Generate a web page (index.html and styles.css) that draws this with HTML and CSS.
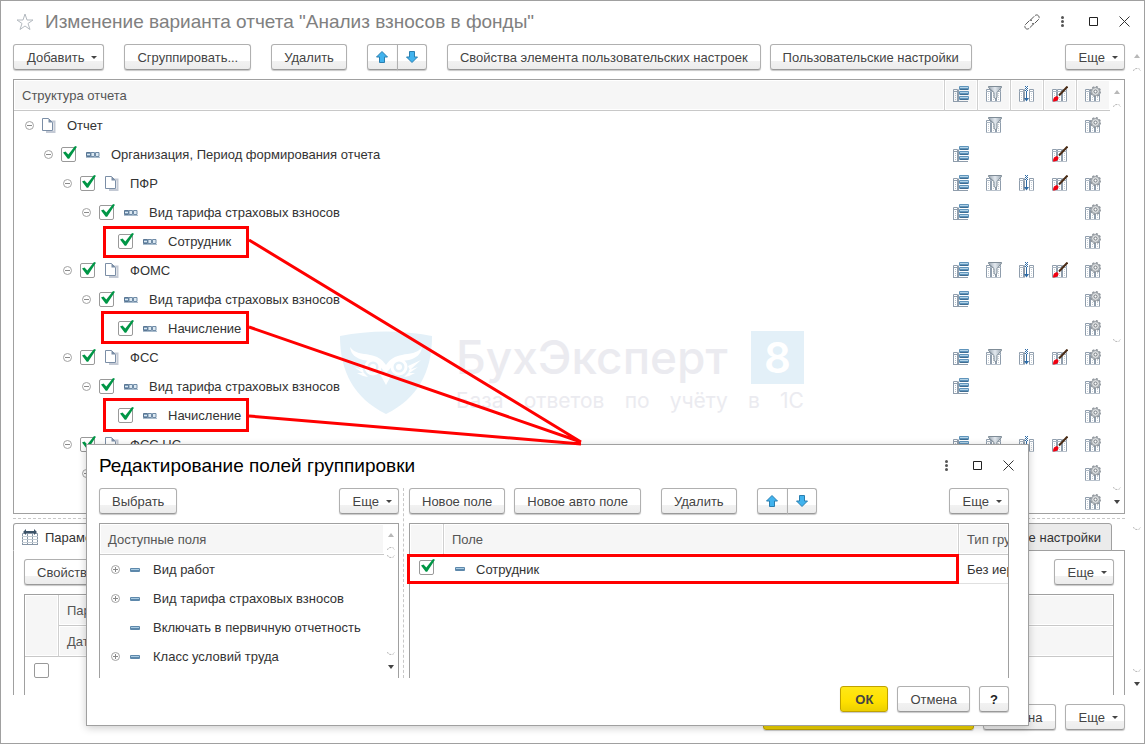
FILE: index.html
```html
<!DOCTYPE html>
<html lang="ru">
<head>
    <meta charset="UTF-8">
    <meta name="viewport" content="width=device-width, initial-scale=1.0">
    <title>Анализ взносов в фонды</title>
    <link rel="stylesheet" href="styles.css">
</head>
<body>
    <svg class="sprite" aria-hidden="true">
        <defs>
            <linearGradient id="steel" x1="0" y1="0" x2="1" y2="0">
                <stop offset="0" stop-color="#9aa6b2"/>
                <stop offset="0.5" stop-color="#e3e9ef"/>
                <stop offset="1" stop-color="#9aa6b2"/>
            </linearGradient>
        </defs>
        <symbol id="i-sheet" viewBox="0 0 16 16">
            <path d="M0 3h15v13H0z" fill="#fff"/>
            <path d="M.5 16V3.5h4V16M5.500 16V3.500h4V16M10.500 16V3.500h4V16" fill="none" stroke="#8f9dac"/>
            <path d="M0 5.500h15" stroke="#a9b5c1"/>
            <path d="M2.500 7v8M7.500 7v8M12.500 7v8" stroke="#c5ced6" stroke-dasharray="1 1"/>
            <path d="M0 15.500h15" stroke="#b9c2cc"/>
        </symbol>
        <symbol id="i-struct" viewBox="0 0 16 16">
            <path d="M.5 16V3.500h4V16M0 15.500h15M0 5.500h5M5.500 15.500v-12" fill="none" stroke="#8f9dac"/>
            <path d="M2.500 7v8" stroke="#b5c0ca" stroke-dasharray="1 1"/>
            <g fill="#5f94bb">
                <rect x="6" y="0" width="10" height="4" rx="1"/>
                <rect x="6" y="5" width="10" height="4" rx="1"/>
                <rect x="6" y="10" width="10" height="4" rx="1"/>
            </g>
            <path d="M7 1.500h8M7 6.500h8M7 11.500h8" stroke="#b4d4e8"/>
            <path d="M7 3.500h8M7 8.500h8M7 13.500h8" stroke="#3f6d92"/>
        </symbol>
        <symbol id="i-filter" viewBox="0 0 16 16">
            <use href="#i-sheet"/>
            <path d="M2.500.5h13v1L11 6.500v5L9.500 12.500 8 11.500v-5L2.500 1.500z" fill="url(#steel)" stroke="#7f8c97"/>
        </symbol>
        <symbol id="i-sort" viewBox="0 0 16 16">
            <use href="#i-sheet"/>
            <path d="M6 0h4v16H6z" fill="#fff"/>
            <path d="M6 .5h3M6 2.500h3M6 4.500h3" stroke="#2c6aa5" stroke-dasharray="1 1"/>
            <path d="M7 1.500h1M7 3.500h1" stroke="#2c6aa5"/>
            <path d="M7.500 5v8" stroke="#2c6aa5"/>
            <path d="M5 12h5l-2.500 3.500z" fill="#2c6aa5"/>
        </symbol>
        <symbol id="i-brush" viewBox="0 0 16 16">
            <use href="#i-sheet"/>
            <path d="M15.500.5 7 9.500" stroke="#4a2c16" stroke-width="2"/>
            <path d="M1 15.500c0-3 1-5 4-5.500l1.500 1.500c0 3-2.500 4-5.500 4z" fill="#f00010"/>
        </symbol>
        <symbol id="i-gear" viewBox="0 0 16 16">
            <use href="#i-sheet"/>
            <circle cx="10.500" cy="5.500" r="4.500" fill="#dfe1e3" stroke="#8b9299" stroke-width="2" stroke-dasharray="2 1.500"/>
            <circle cx="10.500" cy="5.500" r="4" fill="#d9dcde" stroke="#979da3"/>
            <circle cx="10.500" cy="5.500" r="1.500" fill="#fff" stroke="#777d83"/>
        </symbol>
        <symbol id="i-doc" viewBox="0 0 14 15">
            <path d="M5 3.500h7.500v10.500H4" fill="none" stroke="#c3c9d4" stroke-width="2"/>
            <path d="M.5.5h6l4 4v8H.5z" fill="#fff" stroke="#7b8ea6"/>
            <path d="M6.500.5v4h4z" fill="#7b8ea6"/>
        </symbol>
        <symbol id="i-group" viewBox="0 0 14 7">
            <path d="M.5 1.500h4v4h-4z" fill="#7f9fbc" stroke="#5a7692"/>
            <path d="M1 3.500h3" stroke="#dbe8f2"/>
            <path d="M5 1.500h3.500v4H5zM9.500 1.500H13v4H9.500z" fill="#dbe8f2" stroke="#6f8ba6"/>
            <path d="M0 6.500h14" stroke="#a9bccd"/>
        </symbol>
        <symbol id="i-field" viewBox="0 0 10 4">
            <rect width="10" height="4" rx="1" fill="#5d88ab"/>
            <path d="M1 1.500h8" stroke="#a9cbe2"/>
        </symbol>
        <symbol id="i-minus" viewBox="0 0 9 9">
            <circle cx="4.500" cy="4.500" r="4" fill="#fff" stroke="#a3a3a3"/>
            <path d="M2 4.500h5" stroke="#8a8a8a"/>
        </symbol>
        <symbol id="i-plus" viewBox="0 0 9 9">
            <circle cx="4.500" cy="4.500" r="4" fill="#fff" stroke="#a3a3a3"/>
            <path d="M2 4.500h5M4.500 2v5" stroke="#8a8a8a"/>
        </symbol>
        <symbol id="i-up" viewBox="0 0 12 12">
            <path d="M6 .5 11.500 6H8.500v5.500h-5V6H.5z" fill="#41b3ee" stroke="#2a7fb0"/>
        </symbol>
        <symbol id="i-down" viewBox="0 0 12 12">
            <path d="M6 11.500.5 6h3V.5h5V6h3z" fill="#41b3ee" stroke="#2a7fb0"/>
        </symbol>
        <symbol id="i-dots" viewBox="0 0 3 11">
            <g fill="#555"><circle cx="1.500" cy="1.500" r="1.500"/><circle cx="1.500" cy="5.500" r="1.500"/><circle cx="1.500" cy="9.500" r="1.500"/></g>
        </symbol>
        <symbol id="i-max" viewBox="0 0 9 9">
            <path d="M.5.5h8v8h-8z" fill="none" stroke="#222"/>
        </symbol>
        <symbol id="i-close" viewBox="0 0 11 11">
            <path d="M.5.5l10 10M10.500.5l-10 10" stroke="#333"/>
        </symbol>
        <symbol id="i-arc-top" viewBox="0 0 8 3">
            <path d="M.5 3C1 1 2 .5 4 .5S7 1 7.500 3" fill="none" stroke="#b8b8b8" stroke-dasharray="2 1"/>
        </symbol>
        <symbol id="i-arc-bottom" viewBox="0 0 8 3">
            <path d="M.5 0C1 2 2 2.500 4 2.500S7 2 7.500 0" fill="none" stroke="#b8b8b8" stroke-dasharray="2 1"/>
        </symbol>
    </svg>

    <main class="window">
        <header class="titlebar">
            <button class="star" aria-label="Добавить в избранное">
                <svg width="18" height="18" viewBox="0 0 18 18"><path d="M9 1l2 6h6l-5 3.500 2 6-5-3.500-5 3.500 2-6L1 7h6z" fill="#fff" stroke="#b4bac0"/></svg>
            </button>
            <h1>Изменение варианта отчета "Анализ взносов в фонды"</h1>
            <button class="sysbtn" aria-label="Ссылка">
                <svg width="16" height="16" viewBox="0 0 16 16"><path d="M6 6.500 10.500 2c3-3 6 1 4 3.500L11 9c-1 1-2 1-3 .5M10 9.500 5.500 14c-3 3-6-1-4-3.500L5 7c1-1 2-1 3-.5" fill="none" stroke="#555" stroke-dasharray="6 1"/></svg>
            </button>
            <button class="sysbtn" aria-label="Меню"><svg width="3" height="11"><use href="#i-dots"/></svg></button>
            <button class="sysbtn" aria-label="Развернуть"><svg width="9" height="9"><use href="#i-max"/></svg></button>
            <button class="sysbtn" aria-label="Закрыть"><svg width="11" height="11"><use href="#i-close"/></svg></button>
        </header>

        <div class="body">
            <div class="content">
                <div class="toolbar">
                    <button class="btn menu">Добавить</button>
                    <button class="btn">Сгруппировать...</button>
                    <button class="btn">Удалить</button>
                    <div class="pair">
                        <button class="btn" aria-label="Вверх"><svg width="12" height="12"><use href="#i-up"/></svg></button>
                        <button class="btn" aria-label="Вниз"><svg width="12" height="12"><use href="#i-down"/></svg></button>
                    </div>
                    <div class="settings">
                        <button class="btn">Свойства элемента пользовательских настроек</button>
                        <button class="btn">Пользовательские настройки</button>
                    </div>
                    <button class="btn menu last">Еще</button>
                </div>

                <div class="list tree">
                    <table>
                        <thead>
                            <tr>
                                <th>Структура отчета</th>
                                <th class="ic"><svg><use href="#i-struct"/></svg></th>
                                <th class="ic"><svg><use href="#i-filter"/></svg></th>
                                <th class="ic"><svg><use href="#i-sort"/></svg></th>
                                <th class="ic"><svg><use href="#i-brush"/></svg></th>
                                <th class="ic"><svg><use href="#i-gear"/></svg></th>
                            </tr>
                        </thead>
                        <tbody>
                            <tr>
                                <td><div class="node"><button class="toggle" aria-label="Свернуть"><svg><use href="#i-minus"/></svg></button><svg class="doc"><use href="#i-doc"/></svg>Отчет</div></td>
                                <td class="ic"></td>
                                <td class="ic"><svg><use href="#i-filter"/></svg></td>
                                <td class="ic"></td>
                                <td class="ic"></td>
                                <td class="ic"><svg><use href="#i-gear"/></svg></td>
                            </tr>
                            <tr>
                                <td><div class="node l1"><button class="toggle" aria-label="Свернуть"><svg><use href="#i-minus"/></svg></button><label><input type="checkbox" checked><svg class="grp"><use href="#i-group"/></svg>Организация, Период формирования отчета</label></div></td>
                                <td class="ic"><svg><use href="#i-struct"/></svg></td>
                                <td class="ic"></td>
                                <td class="ic"></td>
                                <td class="ic"><svg><use href="#i-brush"/></svg></td>
                                <td class="ic"></td>
                            </tr>
                            <tr>
                                <td><div class="node l2"><button class="toggle" aria-label="Свернуть"><svg><use href="#i-minus"/></svg></button><label><input type="checkbox" checked><svg class="doc"><use href="#i-doc"/></svg>ПФР</label></div></td>
                                <td class="ic"><svg><use href="#i-struct"/></svg></td>
                                <td class="ic"><svg><use href="#i-filter"/></svg></td>
                                <td class="ic"><svg><use href="#i-sort"/></svg></td>
                                <td class="ic"><svg><use href="#i-brush"/></svg></td>
                                <td class="ic"><svg><use href="#i-gear"/></svg></td>
                            </tr>
                            <tr>
                                <td><div class="node l3"><button class="toggle" aria-label="Свернуть"><svg><use href="#i-minus"/></svg></button><label><input type="checkbox" checked><svg class="grp"><use href="#i-group"/></svg>Вид тарифа страховых взносов</label></div></td>
                                <td class="ic"><svg><use href="#i-struct"/></svg></td>
                                <td class="ic"></td>
                                <td class="ic"></td>
                                <td class="ic"></td>
                                <td class="ic"><svg><use href="#i-gear"/></svg></td>
                            </tr>
                            <tr>
                                <td><div class="node leaf"><label><input type="checkbox" checked><svg class="grp"><use href="#i-group"/></svg>Сотрудник</label></div></td>
                                <td class="ic"></td>
                                <td class="ic"></td>
                                <td class="ic"></td>
                                <td class="ic"></td>
                                <td class="ic"><svg><use href="#i-gear"/></svg></td>
                            </tr>
                            <tr>
                                <td><div class="node l2"><button class="toggle" aria-label="Свернуть"><svg><use href="#i-minus"/></svg></button><label><input type="checkbox" checked><svg class="doc"><use href="#i-doc"/></svg>ФОМС</label></div></td>
                                <td class="ic"><svg><use href="#i-struct"/></svg></td>
                                <td class="ic"><svg><use href="#i-filter"/></svg></td>
                                <td class="ic"><svg><use href="#i-sort"/></svg></td>
                                <td class="ic"><svg><use href="#i-brush"/></svg></td>
                                <td class="ic"><svg><use href="#i-gear"/></svg></td>
                            </tr>
                            <tr>
                                <td><div class="node l3"><button class="toggle" aria-label="Свернуть"><svg><use href="#i-minus"/></svg></button><label><input type="checkbox" checked><svg class="grp"><use href="#i-group"/></svg>Вид тарифа страховых взносов</label></div></td>
                                <td class="ic"><svg><use href="#i-struct"/></svg></td>
                                <td class="ic"></td>
                                <td class="ic"></td>
                                <td class="ic"></td>
                                <td class="ic"><svg><use href="#i-gear"/></svg></td>
                            </tr>
                            <tr>
                                <td><div class="node leaf"><label><input type="checkbox" checked><svg class="grp"><use href="#i-group"/></svg>Начисление</label></div></td>
                                <td class="ic"></td>
                                <td class="ic"></td>
                                <td class="ic"></td>
                                <td class="ic"></td>
                                <td class="ic"><svg><use href="#i-gear"/></svg></td>
                            </tr>
                            <tr>
                                <td><div class="node l2"><button class="toggle" aria-label="Свернуть"><svg><use href="#i-minus"/></svg></button><label><input type="checkbox" checked><svg class="doc"><use href="#i-doc"/></svg>ФСС</label></div></td>
                                <td class="ic"><svg><use href="#i-struct"/></svg></td>
                                <td class="ic"><svg><use href="#i-filter"/></svg></td>
                                <td class="ic"><svg><use href="#i-sort"/></svg></td>
                                <td class="ic"><svg><use href="#i-brush"/></svg></td>
                                <td class="ic"><svg><use href="#i-gear"/></svg></td>
                            </tr>
                            <tr>
                                <td><div class="node l3"><button class="toggle" aria-label="Свернуть"><svg><use href="#i-minus"/></svg></button><label><input type="checkbox" checked><svg class="grp"><use href="#i-group"/></svg>Вид тарифа страховых взносов</label></div></td>
                                <td class="ic"><svg><use href="#i-struct"/></svg></td>
                                <td class="ic"></td>
                                <td class="ic"></td>
                                <td class="ic"></td>
                                <td class="ic"><svg><use href="#i-gear"/></svg></td>
                            </tr>
                            <tr>
                                <td><div class="node leaf"><label><input type="checkbox" checked><svg class="grp"><use href="#i-group"/></svg>Начисление</label></div></td>
                                <td class="ic"></td>
                                <td class="ic"></td>
                                <td class="ic"></td>
                                <td class="ic"></td>
                                <td class="ic"><svg><use href="#i-gear"/></svg></td>
                            </tr>
                            <tr>
                                <td><div class="node l2"><button class="toggle" aria-label="Свернуть"><svg><use href="#i-minus"/></svg></button><label><input type="checkbox" checked><svg class="doc"><use href="#i-doc"/></svg>ФСС НС</label></div></td>
                                <td class="ic"><svg><use href="#i-struct"/></svg></td>
                                <td class="ic"><svg><use href="#i-filter"/></svg></td>
                                <td class="ic"><svg><use href="#i-sort"/></svg></td>
                                <td class="ic"><svg><use href="#i-brush"/></svg></td>
                                <td class="ic"><svg><use href="#i-gear"/></svg></td>
                            </tr>
                            <tr>
                                <td><div class="node l3"><button class="toggle" aria-label="Свернуть"><svg><use href="#i-minus"/></svg></button></div></td>
                                <td class="ic"></td>
                                <td class="ic"></td>
                                <td class="ic"></td>
                                <td class="ic"></td>
                                <td class="ic"><svg><use href="#i-gear"/></svg></td>
                            </tr>
                            <tr>
                                <td></td>
                                <td class="ic"></td>
                                <td class="ic"></td>
                                <td class="ic"></td>
                                <td class="ic"></td>
                                <td class="ic"><svg><use href="#i-gear"/></svg></td>
                            </tr>
                        </tbody>
                    </table>
                    <div class="scroll">
                        <i class="tri up"></i>
                        <div class="thumb"><svg><use href="#i-arc-top"/></svg><svg><use href="#i-arc-bottom"/></svg></div>
                        <div class="track"><svg><use href="#i-arc-bottom"/></svg></div>
                        <i class="tri"></i>
                    </div>
                </div>

                <div class="splitter"></div>

                <div class="tabs">
                    <button class="tab active">
                        <svg width="16" height="16" viewBox="0 0 16 16"><path d="M.5 16V4.500h15V16M5.500 5v11M10.500 5v11M0 15.500h16" fill="none" stroke="#8796a6"/><path d="M0 7.500h16M0 10.500h16M0 13.500h16" stroke="#c3ccd4"/><path d="M1 3l3-3v2h8V0l3 3-3 3V4H4v2z" fill="#3c5368"/></svg>
                        Параметры
                    </button>
                    <button class="tab other">Другие настройки</button>
                </div>
                <div class="panel">
                    <div class="toolbar">
                        <button class="btn">Свойства</button>
                        <button class="btn menu last">Еще</button>
                    </div>
                    <div class="list params">
                        <table>
                            <thead>
                                <tr><th class="chk" rowspan="2"></th><th>Параметр</th></tr>
                                <tr><th>Дата</th></tr>
                            </thead>
                            <tbody>
                                <tr><td class="chk"><input type="checkbox" aria-label="Использовать"></td><td></td></tr>
                            </tbody>
                        </table>
                    </div>
                </div>
            </div>

            <div class="scroll">
                <i class="tri up"></i>
                <div class="thumb"><svg><use href="#i-arc-top"/></svg><svg><use href="#i-arc-bottom"/></svg></div>
                <div class="track"><svg><use href="#i-arc-bottom"/></svg></div>
                <i class="tri"></i>
            </div>
        </div>

        <footer class="footer">
            <button class="btn primary">Завершить редактирование</button>
            <button class="btn">Отмена</button>
            <button class="btn menu">Еще</button>
        </footer>

        <div class="watermark" aria-hidden="true">
            <svg width="92" height="83" viewBox="0 0 92 83">
                <path d="M0 5C30-1 62-1 92 5c0 36-14 62-46 78C14 67 0 41 0 5z" fill="#e3f0f8"/>
                <path d="M10 16c5 7 12 6 20 8 7 1 12 4 16 10 4-6 9-9 16-10 8-2 15-1 20-8-1 8-6 11-13 13-10 1-16 4-20 10l-3 3-3-3c-4-6-10-9-20-10-7-2-12-5-13-13z" fill="#fff"/>
                <path d="M11 29l13 6-2 4zM14 36l9 3 1 4zM17 42l7 0 4 4-5-1zM81 29l-13 6 2 4zM78 36l-9 3-1 4zM75 42l-7 0-4 4 5-1z" fill="#fff"/>
                <circle cx="33" cy="36" r="7" fill="#e3f0f8" stroke="#fff" stroke-width="3"/>
                <circle cx="59" cy="36" r="7" fill="#e3f0f8" stroke="#fff" stroke-width="3"/>
                <circle cx="33" cy="36" r="3" fill="#fff"/>
                <circle cx="59" cy="36" r="3" fill="#fff"/>
                <path d="M40 43h12l-6 11z" fill="#fff"/>
            </svg>
            <div class="brand">
                <div class="name"><span>БухЭксперт</span><b>8</b></div>
                <div class="slogan"><span>База</span> <span>ответов</span> <span>по</span> <span>учёту</span> <span>в</span> <span>1С</span></div>
            </div>
        </div>

        <section class="dialog" role="dialog" aria-labelledby="dialogTitle">
            <header class="titlebar">
                <h2 id="dialogTitle">Редактирование полей группировки</h2>
                <button class="sysbtn" aria-label="Меню"><svg width="3" height="11"><use href="#i-dots"/></svg></button>
                <button class="sysbtn" aria-label="Развернуть"><svg width="9" height="9"><use href="#i-max"/></svg></button>
                <button class="sysbtn" aria-label="Закрыть"><svg width="11" height="11"><use href="#i-close"/></svg></button>
            </header>
            <div class="panes">
                <div class="pane available">
                    <div class="toolbar">
                        <button class="btn">Выбрать</button>
                        <button class="btn menu last">Еще</button>
                    </div>
                    <div class="list">
                        <table>
                            <thead>
                                <tr><th>Доступные поля</th></tr>
                            </thead>
                            <tbody>
                                <tr><td><div class="node"><button class="toggle" aria-label="Развернуть"><svg><use href="#i-plus"/></svg></button><svg class="fld"><use href="#i-field"/></svg>Вид работ</div></td></tr>
                                <tr><td><div class="node"><button class="toggle" aria-label="Развернуть"><svg><use href="#i-plus"/></svg></button><svg class="fld"><use href="#i-field"/></svg>Вид тарифа страховых взносов</div></td></tr>
                                <tr><td><div class="node"><span class="toggle"></span><svg class="fld"><use href="#i-field"/></svg>Включать в первичную отчетность</div></td></tr>
                                <tr><td><div class="node"><button class="toggle" aria-label="Развернуть"><svg><use href="#i-plus"/></svg></button><svg class="fld"><use href="#i-field"/></svg>Класс условий труда</div></td></tr>
                            </tbody>
                        </table>
                        <div class="scroll">
                            <i class="tri up"></i>
                            <div class="thumb"><svg><use href="#i-arc-top"/></svg><svg><use href="#i-arc-bottom"/></svg></div>
                            <div class="track"><svg><use href="#i-arc-bottom"/></svg></div>
                            <i class="tri"></i>
                        </div>
                    </div>
                </div>
                <div class="divider"></div>
                <div class="pane chosen">
                    <div class="toolbar">
                        <div class="settings">
                            <button class="btn">Новое поле</button>
                            <button class="btn">Новое авто поле</button>
                        </div>
                        <button class="btn">Удалить</button>
                        <div class="pair">
                            <button class="btn" aria-label="Вверх"><svg width="12" height="12"><use href="#i-up"/></svg></button>
                            <button class="btn" aria-label="Вниз"><svg width="12" height="12"><use href="#i-down"/></svg></button>
                        </div>
                        <button class="btn menu last">Еще</button>
                    </div>
                    <div class="list">
                        <table>
                            <thead>
                                <tr><th class="chk"></th><th>Поле</th><th class="type">Тип группировки</th></tr>
                            </thead>
                            <tbody>
                                <tr>
                                    <td class="chk"><input type="checkbox" id="fieldOn" checked></td>
                                    <td><label class="field" for="fieldOn"><svg class="fld"><use href="#i-field"/></svg>Сотрудник</label></td>
                                    <td class="type">Без иерархии</td>
                                </tr>
                            </tbody>
                        </table>
                    </div>
                </div>
            </div>
            <footer class="footer">
                <button class="btn primary">ОК</button>
                <button class="btn">Отмена</button>
                <button class="btn help">?</button>
            </footer>
        </section>

        <!-- red frames and pointer lines -->
        <svg class="marks" aria-hidden="true">
            <g fill="none" stroke="#f00" stroke-width="3">
                <path d="M103.500 226.500h143v29h-143zM101.500 311.500h145v30h-145zM103.500 398.500h143v31h-143zM407.500 554.500h549v27h-549z"/>
                <path d="M248 239l332 202M248 326l332 115M248 415l332 28"/>
            </g>
        </svg>
    </main>
</body>
</html>
```
FILE: styles.css
```css
* {
    box-sizing: border-box;
}
body {
    margin: 0;
    font-family: "Liberation Sans", Arial, sans-serif;
    font-size: 13px;
    color: #333;
    background-color: #fff;
}
button {
    font: inherit;
    color: inherit;
    background: none;
    border: none;
    padding: 0;
    cursor: pointer;
}
svg {
    display: block;
    flex: none;
}
.sprite {
    position: absolute;
    width: 0;
    height: 0;
}
.window {
    position: relative;
    display: flex;
    flex-direction: column;
    height: 100vh;
    min-height: 640px;
    border: 1px solid #a0a0a0;
    overflow: hidden;
}

/* title bars */
.titlebar {
    display: flex;
    align-items: center;
    height: 43px;
    padding: 0 4px 2px 15px;
}
.titlebar h1,
.titlebar h2 {
    flex: 1;
    margin: 0;
    font-size: 19px;
    font-weight: normal;
    white-space: nowrap;
}
.titlebar h1 {
    color: #808080;
}
.titlebar h2 {
    color: #000;
}
.star {
    margin-right: 11px;
}
.sysbtn {
    display: flex;
    justify-content: center;
    align-items: center;
    width: 31px;
    height: 30px;
}

/* buttons */
.toolbar {
    display: flex;
    gap: 20px;
    margin-bottom: 9px;
}
.settings {
    display: flex;
    gap: 9px;
}
.btn {
    height: 26px;
    padding: 0 12px;
    color: #444;
    white-space: nowrap;
    background: linear-gradient(#fff 65%, #f2f2f2 66%, #ececec);
    border: 1px solid #b0b0b0;
    border-bottom-color: #999;
    border-radius: 3px;
    box-shadow: 0 1px 1px #c8c8c8;
}
.menu {
    display: flex;
    align-items: center;
    gap: 7px;
    padding: 0 6px 0 13px;
}
.menu::after {
    content: "";
    border: 3px solid transparent;
    border-top-color: #444;
    border-bottom: none;
}
.last {
    margin-left: auto;
}
.pair {
    display: flex;
}
.pair .btn {
    display: flex;
    justify-content: center;
    align-items: center;
    width: 30px;
    padding: 0;
}
.pair .btn:first-child {
    width: 31px;
    margin-right: -1px;
    border-radius: 3px 0 0 3px;
}
.pair .btn:last-child {
    border-radius: 0 3px 3px 0;
}
.primary {
    padding: 0 14px;
    font-weight: bold;
    background: linear-gradient(#ffe817, #ffe100 60%, #ecd000);
    border-color: #c0a200;
}
.help {
    font-weight: bold;
    color: #222;
    padding: 0 10px;
}

/* main area */
.body {
    flex: 1;
    display: flex;
    min-height: 0;
}
.content {
    flex: 1;
    display: flex;
    flex-direction: column;
    min-width: 0;
    padding-left: 12px;
}
.list {
    display: flex;
    border: 1px solid #a0a0a0;
    overflow: hidden;
}
.list table {
    flex: 1;
    align-self: flex-start;
    border-collapse: separate;
    border-spacing: 0;
    table-layout: fixed;
    width: 100%;
    min-width: 0;
}
th {
    height: 31px;
    padding: 0 8px;
    text-align: left;
    font-weight: normal;
    color: #555;
    white-space: nowrap;
    background-color: #f6f6f6;
    border-bottom: 1px solid #c8c8c8;
    border-right: 1px solid #d0d0d0;
    box-shadow: inset 0 0 0 1px #fff;
}
th:last-child {
    border-right: none;
}
td {
    height: 29px;
    padding: 0;
    white-space: nowrap;
}
.ic {
    width: 33px;
    padding: 0 8px 2px;
}
.ic svg {
    width: 16px;
    height: 16px;
}
.tree {
    flex: 1;
}
.node,
.node label {
    display: flex;
    align-items: center;
    gap: 8px;
}
.node {
    padding-left: 11px;
}
.l1 {
    padding-left: 30px;
}
.l2 {
    padding-left: 49px;
}
.l3 {
    padding-left: 68px;
}
.leaf {
    padding-left: 104px;
}
.toggle {
    width: 9px;
    height: 9px;
}
.toggle svg {
    width: 9px;
    height: 9px;
}
.doc {
    width: 17px;
    height: 15px;
    padding-right: 3px;
}
.grp {
    width: 17px;
    height: 7px;
    padding-right: 3px;
}
.fld {
    width: 10px;
    height: 4px;
}
input[type="checkbox"] {
    appearance: none;
    position: relative;
    flex: none;
    width: 15px;
    height: 15px;
    margin: 0 2px 0 0;
    border: 1px solid #999;
    border-radius: 2px;
    background-color: #fff;
}
input[type="checkbox"]:checked::after {
    content: "";
    position: absolute;
    left: 1px;
    top: -2px;
    width: 14px;
    height: 13px;
    background-color: #009646;
    clip-path: polygon(0 50%, 18% 42%, 38% 65%, 86% 0, 100% 6%, 44% 98%, 34% 98%);
}

/* scroll columns */
.scroll {
    display: flex;
    flex-direction: column;
    align-items: center;
    width: 14px;
    padding: 10px 0 9px;
}
.scroll svg {
    width: 8px;
    height: 3px;
}
.tri {
    border: 3px solid transparent;
    border-top: 4px solid #444;
    border-bottom: none;
}
.tri.up {
    border-top: none;
    border-bottom: 4px solid #b8b8b8;
}
.thumb {
    flex: 8;
    display: flex;
    flex-direction: column;
    justify-content: space-between;
    margin-top: 10px;
}
.track {
    flex: 5;
    display: flex;
    align-items: flex-end;
    margin-bottom: 10px;
}
.body > .scroll {
    width: 19px;
    padding-left: 5px;
}
.body > .scroll .thumb {
    flex: 13;
}
.body > .scroll .track {
    flex: 4;
}

.splitter {
    margin: 4px 0;
    border-top: 1px dashed #c8c8c8;
}

/* tabs */
.tabs {
    display: flex;
    justify-content: space-between;
    padding-right: 13px;
    background: linear-gradient(#a0a0a0, #a0a0a0) bottom / 100% 1px no-repeat;
}
.tab {
    display: flex;
    align-items: center;
    gap: 7px;
    height: 28px;
    padding: 0 10px 0 8px;
    border: 1px solid #a0a0a0;
    border-radius: 3px 3px 0 0;
}
.tab.active {
    background-color: #fff;
    border-bottom-color: #fff;
}
.tab.other {
    background-color: #ebebeb;
}
.panel {
    padding: 8px 10px 0;
    border: solid #a0a0a0;
    border-width: 0 1px;
}
.params {
    height: 101px;
    border-bottom: none;
}
.chk {
    width: 34px;
    padding: 0 0 0 9px;
}

.footer {
    display: flex;
    justify-content: flex-end;
    gap: 9px;
    padding: 9px 19px 13px 12px;
}

/* faint logo behind the pointer lines */
.watermark {
    position: absolute;
    left: 339px;
    top: 330px;
    display: flex;
    gap: 24px;
    font-family: Inter, sans-serif;
    color: #ebebf0;
}
.brand {
    width: 348px;
}
.name {
    display: flex;
    justify-content: space-between;
    font-size: 46px;
    font-weight: 500;
    line-height: 53px;
}
.name b {
    width: 53px;
    font-size: 42px;
    font-weight: 600;
    text-align: center;
    color: #fff;
    background-color: #e3f0f8;
}
.slogan {
    display: flex;
    justify-content: space-between;
    margin-top: 5px;
    font-size: 21px;
    line-height: 24px;
}

/* dialog */
.dialog {
    position: absolute;
    left: 85px;
    right: 115px;
    top: 443px;
    background-color: #fff;
    border: 1px solid #a0a0a0;
    box-shadow: 0 2px 8px rgba(0,0,0,0.2);
}
.dialog .titlebar {
    padding-left: 12px;
}
.panes {
    display: flex;
    padding: 0 19px 0 12px;
}
.available {
    width: 300px;
}
.divider {
    margin: 0 5px 0 4px;
    border-left: 1px dashed #c8c8c8;
}
.chosen {
    flex: 1;
    min-width: 0;
}
.pane .list {
    height: 155px;
    border-bottom: none;
}
.available .scroll {
    padding-top: 9px;
}
.available .thumb {
    flex: none;
    gap: 5px;
}
.available .track {
    flex: 1;
}
.available .node {
    gap: 13px;
}
.available .fld {
    margin-left: -3px;
}
.field {
    display: flex;
    align-items: center;
    gap: 11px;
    padding-left: 11px;
}
.chosen .type {
    width: 49px;
    padding: 0 0 0 8px;
    overflow: hidden;
}
.chosen td {
    border-bottom: 1px solid #e0e0e0;
}
.dialog .footer {
    padding-top: 8px;
    padding-bottom: 13px;
}

.marks {
    position: absolute;
    left: 0;
    top: 0;
    width: 100%;
    height: 100%;
    pointer-events: none;
}
```
